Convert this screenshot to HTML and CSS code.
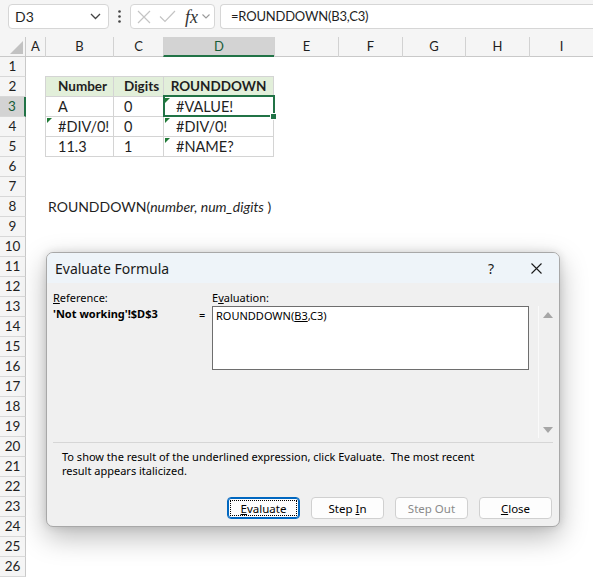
FILE: index.html
```html
<!DOCTYPE html>
<html>
<head>
<meta charset="utf-8">
<link rel="stylesheet" href="styles.css">
</head>
<body>
<div class="toolbar">
  <div class="namebox"><span>D3</span>
    <svg width="11" height="7" viewBox="0 0 11 7"><polyline points="1,1 5.5,5.5 10,1" fill="none" stroke="#444" stroke-width="1.3"/></svg>
  </div>
  <div class="dots"><svg width="3" height="13" viewBox="0 0 3 13"><circle cx="1.5" cy="1.5" r="1.3" fill="#444"/><circle cx="1.5" cy="6.5" r="1.3" fill="#444"/><circle cx="1.5" cy="11.5" r="1.3" fill="#444"/></svg></div>
  <div class="fxbox">
    <svg class="ic" width="14" height="14" viewBox="0 0 14 14"><path d="M1 1L13 13M13 1L1 13" stroke="#c4c4c4" stroke-width="1.2" fill="none"/></svg>
    <svg class="ic ck" width="17" height="13" viewBox="0 0 17 13"><polyline points="1,6.5 6,11.5 16,1" stroke="#c4c4c4" stroke-width="1.2" fill="none"/></svg>
    <span class="fx">fx</span>
    <svg class="chev2" width="8" height="5" viewBox="0 0 8 5"><polyline points="0.5,0.5 4,4 7.5,0.5" fill="none" stroke="#9a9a9a" stroke-width="1.1"/></svg>
  </div>
  <div class="formula">=ROUNDDOWN(B3,C3)</div>
</div>

<div class="sheet">
  <div class="r hdr">
    <div class="corner"><svg width="15" height="15" viewBox="0 0 15 15"><polygon points="14,1 14,14 1,14" fill="#c2c2c2"/></svg></div>
    <div class="ch chA">A</div><div class="ch">B</div><div class="ch">C</div><div class="ch chsel">D</div><div class="ch">E</div><div class="ch">F</div><div class="ch">G</div><div class="ch">H</div><div class="ch">I</div>
  </div>
  <div class="r"><div class="rh">1</div><div></div><div class="bb"></div><div class="bb"></div><div class="bb"></div></div>
  <div class="r"><div class="rh">2</div><div></div><div class="t th">Number</div><div class="t th tc">Digits</div><div class="t th td tcen">ROUNDDOWN</div></div>
  <div class="r"><div class="rh rhsel">3</div><div></div><div class="t">A</div><div class="t tc">0</div><div class="t td sel err">#VALUE!<span class="handle"></span></div></div>
  <div class="r"><div class="rh">4</div><div></div><div class="t err">#DIV/0!</div><div class="t tc">0</div><div class="t td err">#DIV/0!</div></div>
  <div class="r"><div class="rh">5</div><div></div><div class="t">11.3</div><div class="t tc">1</div><div class="t td err">#NAME?</div></div>
  <div class="r"><div class="rh">6</div></div>
  <div class="r"><div class="rh">7</div></div>
  <div class="r"><div class="rh">8</div><div></div><div class="syn">ROUNDDOWN(<i>number, num_digits</i> )</div></div>
  <div class="r"><div class="rh">9</div></div>
  <div class="r"><div class="rh">10</div></div>
  <div class="r"><div class="rh">11</div></div>
  <div class="r"><div class="rh">12</div></div>
  <div class="r"><div class="rh">13</div></div>
  <div class="r"><div class="rh">14</div></div>
  <div class="r"><div class="rh">15</div></div>
  <div class="r"><div class="rh">16</div></div>
  <div class="r"><div class="rh">17</div></div>
  <div class="r"><div class="rh">18</div></div>
  <div class="r"><div class="rh">19</div></div>
  <div class="r"><div class="rh">20</div></div>
  <div class="r"><div class="rh">21</div></div>
  <div class="r"><div class="rh">22</div></div>
  <div class="r"><div class="rh">23</div></div>
  <div class="r"><div class="rh">24</div></div>
  <div class="r"><div class="rh">25</div></div>
  <div class="r"><div class="rh">26</div></div>
</div>

<div class="dlg">
  <div class="tbar">
    <span class="ttl">Evaluate Formula</span>
    <span class="help">?</span>
    <svg class="xbtn" width="11" height="11" viewBox="0 0 11 11"><path d="M0.5 0.5L10.5 10.5M10.5 0.5L0.5 10.5" stroke="#1a1a1a" stroke-width="1.1" fill="none"/></svg>
  </div>
  <div class="dbody">
    <div class="top">
      <div class="lbl"><u>R</u>eference:</div>
      <div class="lbl lbl2">E<u>v</u>aluation:</div>
      <div class="refv">'Not working'!$D$3</div>
      <div class="eq">=</div>
      <div class="ebox">ROUNDDOWN(<u>B3</u>,C3)</div>
      <div class="sb">
        <svg width="10" height="6" viewBox="0 0 10 6"><polygon points="5,0 10,6 0,6" fill="#a6a6a6"/></svg>
        <svg width="10" height="6" viewBox="0 0 10 6"><polygon points="0,0 10,0 5,6" fill="#a6a6a6"/></svg>
      </div>
    </div>
    <div class="sep"></div>
    <div class="msg">
      <div class="ml">To show the result of the underlined expression, click Evaluate.&nbsp; The most recent</div>
      <div class="ml">result appears italicized.</div>
    </div>
    <div class="btns">
      <div class="btn focus"><span class="fr"><span><u>E</u>valuate</span></span></div>
      <div class="btn"><span>Step <u>I</u>n</span></div>
      <div class="btn dis"><span>Step Out</span></div>
      <div class="btn"><span><u>C</u>lose</span></div>
    </div>
  </div>
</div>
</body>
</html>
```

FILE: styles.css
```css
* { box-sizing: border-box; margin: 0; padding: 0; }
html, body { width: 593px; height: 578px; overflow: hidden; }
body { background: #fff; font-family: Lato, "Liberation Sans", sans-serif; color: #1f1f1f; position: relative; }

.toolbar { height: 37px; background: #f5f5f5; display: flex; align-items: flex-start; padding: 4px 0 0 8px; }
.namebox { width: 101px; height: 25px; background: #fff; border: 1px solid #d6d6d6; border-radius: 4px; display: flex; align-items: center; justify-content: space-between; padding: 0 7px 0 6px; font-size: 14px; }
.dots { width: 21px; height: 25px; display: flex; align-items: center; justify-content: center; }
.fxbox { width: 85px; height: 25px; background: #fff; border: 1px solid #d6d6d6; border-radius: 4px; display: flex; align-items: center; padding-left: 6px; }
.fxbox .ck { margin-left: 8px; }
.fx { font-family: "Liberation Serif", serif; font-style: italic; font-size: 18px; margin-left: 9px; color: #333; line-height: 1; }
.chev2 { margin-left: 4px; }
.formula { flex: 1; height: 25px; margin-left: 5px; background: #fff; border: 1px solid #d6d6d6; border-right: none; border-radius: 4px 0 0 4px; padding-left: 10px; font-size: 13px; letter-spacing: -0.2px; line-height: 23px; }

.r { display: grid; grid-template-columns: 26px 19px 68px 50px 111px 64px 64px 63px 64px 64px; height: 20px; }
.hdr { background: #f5f5f5; border-bottom: 1px solid #c9c9c9; }
.corner { border-right: 1px solid #c9c9c9; display: flex; align-items: flex-end; justify-content: flex-end; padding: 0 1px 2px 0; }
.ch { border-left: 1px solid #d2d2d2; font-size: 13px; text-align: center; line-height: 19px; }
.chA { border-left: none; }
.chsel { background: #d3d3d3; border-bottom: 2px solid #217346; color: #185c37; line-height: 18px; }
.rh { background: #f5f5f5; border-right: 1px solid #c9c9c9; border-bottom: 1px solid #d8d8d8; font-size: 13.5px; text-align: center; line-height: 19px; }
.rhsel { background: #d3d3d3; border-right: 2px solid #217346; color: #185c37; }

.bb { border-bottom: 1px solid #d4d4d4; }
.t { border-left: 1px solid #d4d4d4; border-bottom: 1px solid #d4d4d4; font-size: 14.5px; line-height: 19px; padding-left: 12px; position: relative; white-space: nowrap; }
.tc { padding-left: 10px; }
.td { border-right: 1px solid #d4d4d4; }
.th { background: #e2efda; font-weight: bold; font-size: 13.5px; }
.th.tc { padding-left: 10px; }
.tcen { text-align: center; padding-left: 0; }
.err::before { content: ""; position: absolute; left: 1px; top: 1px; border-style: solid; border-width: 5px 5px 0 0; border-color: #1f7a36 transparent transparent transparent; }
.sel { z-index: 1; }
.sel::after { content: ""; position: absolute; left: -1px; right: -2px; top: -2px; bottom: -1px; border: 2px solid #217346; }
.handle { position: absolute; right: -4px; bottom: -4px; width: 7px; height: 7px; background: #217346; border: 1px solid #fff; z-index: 2; }
.syn { grid-column: 3 / 7; font-size: 14px; line-height: 20px; padding-left: 3px; white-space: nowrap; }

.dlg { position: absolute; left: 46px; top: 252px; width: 514px; height: 275px; background: #f0f0f0; border: 1px solid #a8a8a8; border-radius: 7px; overflow: hidden; box-shadow: 0 10px 28px rgba(0,0,0,0.28), 0 0 8px rgba(0,0,0,0.12); font-family: "Noto Sans", "Open Sans", sans-serif; color: #000; }
.tbar { height: 30px; background: #eef4f9; display: flex; align-items: center; padding-left: 8px; }
.ttl { font-size: 14px; flex: 1; color: #1a1a1a; }
.help { font-size: 14px; margin-right: 37px; color: #1a1a1a; }
.xbtn { margin-right: 17px; }
.dbody { padding: 0 0 0 6px; }
.top { display: grid; grid-template-columns: 146px 13px 317px 9px 18px; grid-template-rows: 17px 132px; padding-top: 6px; font-size: 11px; }
.lbl { line-height: 17px; grid-row: 1; grid-column: 1; }
.lbl2 { grid-column: 3; }
.refv { grid-column: 1; grid-row: 2; font-weight: bold; line-height: 15px; }
.eq { grid-column: 2; grid-row: 2; line-height: 17px; }
.ebox { grid-column: 3; grid-row: 2; height: 64px; background: #fff; border: 1px solid #6e6e6e; padding: 1px 3px; line-height: 15px; }
.sb { grid-column: 5; grid-row: 2; border-left: 1px solid #fafafa; display: flex; flex-direction: column; justify-content: space-between; align-items: center; padding: 6px 0 5px 0; }
.sep { height: 1px; background: #d6d6d6; margin: 4px 6px 0 0; }
.msg { font-size: 11px; padding: 7px 0 0 9px; }
.ml { height: 14px; line-height: 14px; white-space: nowrap; }
.btns { display: flex; justify-content: flex-end; gap: 11px; padding: 19px 7px 0 0; }
.btn { width: 73px; height: 22px; background: #fdfdfd; border: 1px solid #d0d0d0; border-radius: 4px; font-size: 11.5px; display: flex; align-items: center; justify-content: center; }
.btn.focus { border: 1px solid #0067c0; box-shadow: inset 0 0 0 1px #0067c0; padding: 2px; }
.btn .fr { flex: 1; align-self: stretch; border: 1px dotted #000; display: flex; align-items: center; justify-content: center; }
.btn.dis { color: #8a8a8a; }
```
